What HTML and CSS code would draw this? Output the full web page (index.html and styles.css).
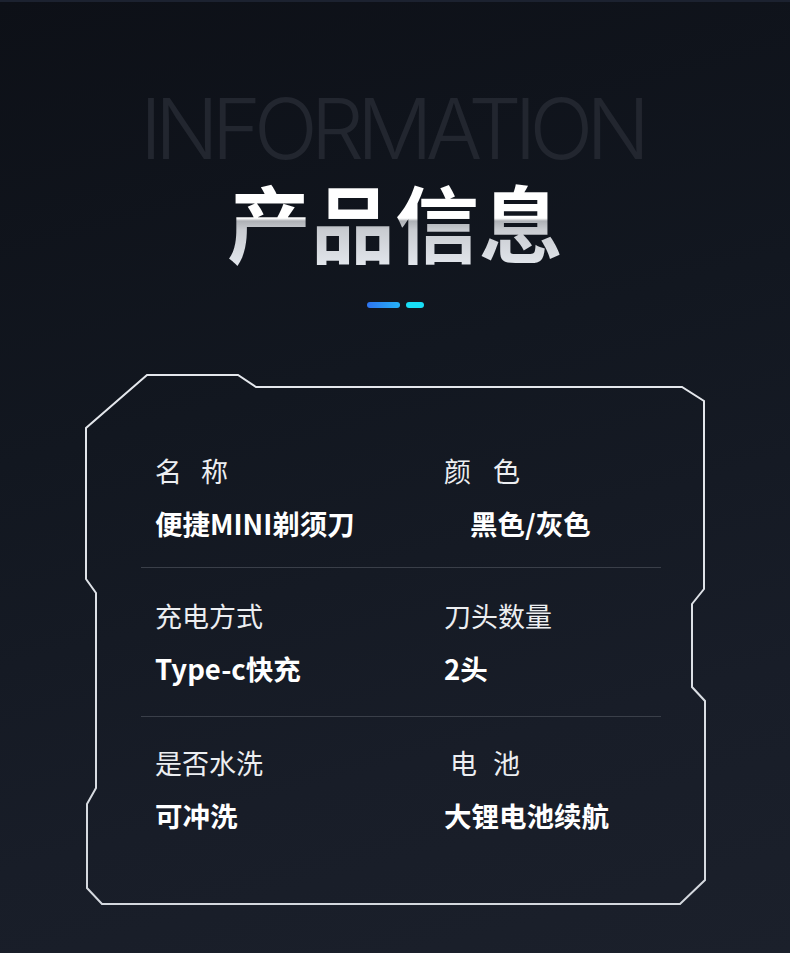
FILE: index.html
```html
<!DOCTYPE html>
<html lang="zh-CN">
<head>
<meta charset="utf-8">
<title>产品信息</title>
<link rel="stylesheet" href="styles.css">
</head>
<body>
<div class="page">
  <header class="head">
    <div class="en">INFORMATION</div>
    <h1 class="title">产品信息</h1>
    <div class="accent"><span class="bar bar-long"></span><span class="bar bar-short"></span></div>
  </header>

  <section class="card">
    <svg class="frame" viewBox="80 365 632 545" width="632" height="545" aria-hidden="true">
      <defs>
        <linearGradient id="stroke" x1="0" y1="0" x2="0" y2="1">
          <stop offset="0" stop-color="#e4e7ec"/>
          <stop offset="1" stop-color="#d4d8de"/>
        </linearGradient>
      </defs>
      <polygon points="147,374 238,374 256,386 682,386 704,400 704,588 692,603 692,686 705,700 705,879 680,903 102,903 87,887 87,803 96,787 96,592 86,578 86,427" fill="none" stroke="url(#stroke)" stroke-width="2" stroke-linejoin="miter"/>
    </svg>

    <div class="rows">
      <div class="row">
        <div class="cell">
          <div class="label spaced-a">名称</div>
          <div class="value">便捷MINI剃须刀</div>
        </div>
        <div class="cell">
          <div class="label spaced-b">颜色</div>
          <div class="value indent-lg">黑色/灰色</div>
        </div>
      </div>
      <div class="row">
        <div class="cell">
          <div class="label">充电方式</div>
          <div class="value">Type-c快充</div>
        </div>
        <div class="cell">
          <div class="label">刀头数量</div>
          <div class="value">2头</div>
        </div>
      </div>
      <div class="row">
        <div class="cell">
          <div class="label">是否水洗</div>
          <div class="value">可冲洗</div>
        </div>
        <div class="cell">
          <div class="label spaced-c indent-sm">电池</div>
          <div class="value">大锂电池续航</div>
        </div>
      </div>
    </div>
  </section>
</div>
</body>
</html>
```
FILE: styles.css
```css
* { box-sizing: border-box; }
html, body { margin: 0; padding: 0; }
body {
  width: 790px;
  height: 953px;
  overflow: hidden;
  background: linear-gradient(165deg, #0d1017 0%, #121720 40%, #181d28 75%, #1b202b 100%);
  font-family: "Noto Sans CJK SC", "Noto Sans", sans-serif;
  color: #fff;
}
.page {
  position: relative;
  width: 790px;
  height: 953px;
  border-top: 2px solid #1c2230;
}
.head {
  display: flex;
  flex-direction: column;
  align-items: center;
  padding-top: 85px;
}
.en {
  font-family: "Inter", "Lato", sans-serif;
  font-weight: 300;
  font-size: 84px;
  line-height: 84px;
  height: 84px;
  letter-spacing: -7px;
  color: #22262f;
  padding-right: 7px;
}
.title {
  margin: 4px 0 0;
  font-size: 84px;
  line-height: 92px;
  font-weight: 700;
  letter-spacing: 0;
  background: linear-gradient(180deg, #ffffff 0%, #ffffff 47%, #aeb1b6 50%, #c9ccd1 60%, #e3e7ed 100%);
  -webkit-background-clip: text;
  background-clip: text;
  color: transparent;
}
.accent {
  display: flex;
  gap: 6px;
  margin-top: 35px;
}
.bar {
  display: block;
  height: 6px;
  border-radius: 3px;
}
.bar-long { width: 33px; background: linear-gradient(90deg, #2e74f0, #26b2f6); }
.bar-short { width: 18px; background: #18def6; }

.card {
  position: relative;
  width: 632px;
  height: 545px;
  margin: 58px 0 0 80px;
}
.frame {
  position: absolute;
  left: 0;
  top: 0;
}
.rows {
  position: relative;
  width: 520px;
  margin-left: 61px;
  padding-top: 87px;
}
.row {
  display: grid;
  grid-template-columns: 289px 1fr;
  padding: 30px 0 30px 14px;
  border-top: 1px solid #3a3f49;
}
.row:first-child {
  border-top: 0;
  padding-top: 0;
  padding-bottom: 26px;
}
.row:last-child { padding-top: 28px; }
.label {
  font-size: 27px;
  line-height: 36px;
  font-weight: 400;
  color: #eceef1;
}
.value {
  margin-top: 16px;
  font-size: 27.5px;
  line-height: 36px;
  font-weight: 700;
  color: #ffffff;
}
.spaced-a { letter-spacing: 19px; }
.spaced-b { letter-spacing: 22px; }
.spaced-c { letter-spacing: 16px; }
.indent-lg { padding-left: 26px; }
.indent-sm { padding-left: 6px; }
```
